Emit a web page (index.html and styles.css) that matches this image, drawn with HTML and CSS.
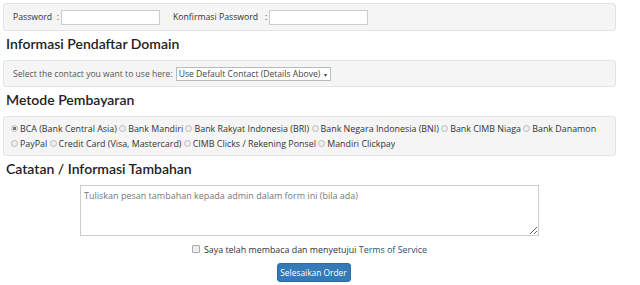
FILE: index.html
```html
<!DOCTYPE html>
<html>
    <head>
        <meta charset="UTF-8">
        <title>Checkout</title>
        <link rel="stylesheet" href="styles.css">
    </head>
    <body>
        <div class="maindiv">
            <div class="well passrow">
                <label>Password &nbsp;:</label>
                <input type="password" class="passinput">
                <label class="konfirm">Konfirmasi Password &nbsp;&nbsp;:</label>
                <input type="password" class="passinput">
            </div>

            <h2>Informasi Pendaftar Domain</h2>
            <div class="well contactrow">
                <span>Select the contact you want to use here:</span>
                <div class="fakeselect">Use Default Contact (Details Above) <span class="arrow">&#9662;</span></div>
            </div>

            <h2>Metode Pembayaran</h2>
            <div class="well payrow">
                <label><span class="radio checked"></span>BCA (Bank Central Asia)</label>
                <label><span class="radio"></span>Bank Mandiri</label>
                <label><span class="radio"></span>Bank Rakyat Indonesia (BRI)</label>
                <label><span class="radio"></span>Bank Negara Indonesia (BNI)</label>
                <label><span class="radio"></span>Bank CIMB Niaga</label>
                <label><span class="radio"></span>Bank Danamon</label>
                <label><span class="radio"></span>PayPal</label>
                <label><span class="radio"></span>Credit Card (Visa, Mastercard)</label>
                <label><span class="radio"></span>CIMB Clicks / Rekening Ponsel</label>
                <label><span class="radio"></span>Mandiri Clickpay</label>
            </div>

            <h2>Catatan / Informasi Tambahan</h2>
            <div class="notes">
                <textarea class="notearea" placeholder="Tuliskan pesan tambahan kepada admin dalam form ini (bila ada)"></textarea>
            </div>
            <div class="tos">
                <span class="checkbox"></span>Saya telah membaca dan menyetujui <a href="#">Terms of Service</a>
            </div>
            <div class="submitrow">
                <button class="orderbutton">Selesaikan Order</button>
            </div>
        </div>
    </body>
</html>
```

FILE: styles.css
```css
*{
    font-family: "Open Sans", sans-serif;
    box-sizing: border-box;
}
body{
    margin: 0;
    color: #333;
}
.maindiv{
    width: 613px;
    margin-left: 3px;
    padding-top: 3px;
}
.well{
    background-color: #f5f5f5;
    border: solid 1px #e3e3e3;
    border-radius: 3px;
    font-size: 8.7px;
}
.passrow{
    display: flex;
    align-items: center;
    height: 28px;
    padding-left: 9px;
}
.passrow label{
    margin-right: 2px;
}
.passinput{
    width: 99px;
    height: 15px;
    border: solid 1px #ccc;
    background: white;
    padding: 0;
}
.konfirm{
    margin-left: 13px;
}
h2{
    font-family: "Lato", sans-serif;
    font-size: 14px;
    font-weight: 600;
    color: #222;
    margin: 4px 0 7px 3px;
    line-height: 18px;
}
.contactrow{
    display: flex;
    align-items: center;
    height: 27px;
    padding-left: 9px;
    color: #555;
    font-size: 8.6px;
}
.fakeselect{
    margin-left: 3px;
    height: 14px;
    line-height: 12px;
    border: solid 1px #bbb;
    background: white;
    padding: 0 3px 0 2px;
    color: #444;
}
.arrow{
    font-size: 6px;
    margin-left: 1px;
}
.payrow{
    padding: 4px 7px;
    line-height: 15px;
    color: #333;
    height: 40px;
    font-size: 8.9px;
}
.payrow label{
    white-space: nowrap;
}
.radio{
    display: inline-block;
    width: 7px;
    height: 7px;
    border-radius: 50%;
    border: solid 1px #bbb;
    background: #eee;
    margin-right: 2px;
}
.radio.checked{
    background: radial-gradient(circle, #777 0 1.6px, #eee 2px);
}
.notes{
    display: flex;
    justify-content: center;
}
.notearea{
    width: 459px;
    height: 51px;
    border: solid 1px #ccc;
    font-size: 9px;
    padding: 3px 3px;
    color: #555;
    margin: 0;
    display: block;
    resize: vertical;
}
.notearea::placeholder{
    color: #777;
}
.tos{
    text-align: center;
    font-size: 8.9px;
    margin-top: 7px;
    line-height: 14px;
    color: #333;
}
.tos a{
    color: #23527c;
    text-decoration: none;
}
.checkbox{
    display: inline-block;
    width: 8px;
    height: 8px;
    border: solid 1px #aaa;
    border-radius: 1px;
    background: #eee;
    margin-right: 4px;
}
.submitrow{
    display: flex;
    justify-content: center;
    margin-top: 6px;
}
.orderbutton{
    background-color: #337ab7;
    border: solid 1px #2e6da4;
    color: white;
    font-size: 8.4px;
    height: 19px;
    width: 74px;
    border-radius: 3px;
    padding: 0;
    margin-left: 8px;
}
```
